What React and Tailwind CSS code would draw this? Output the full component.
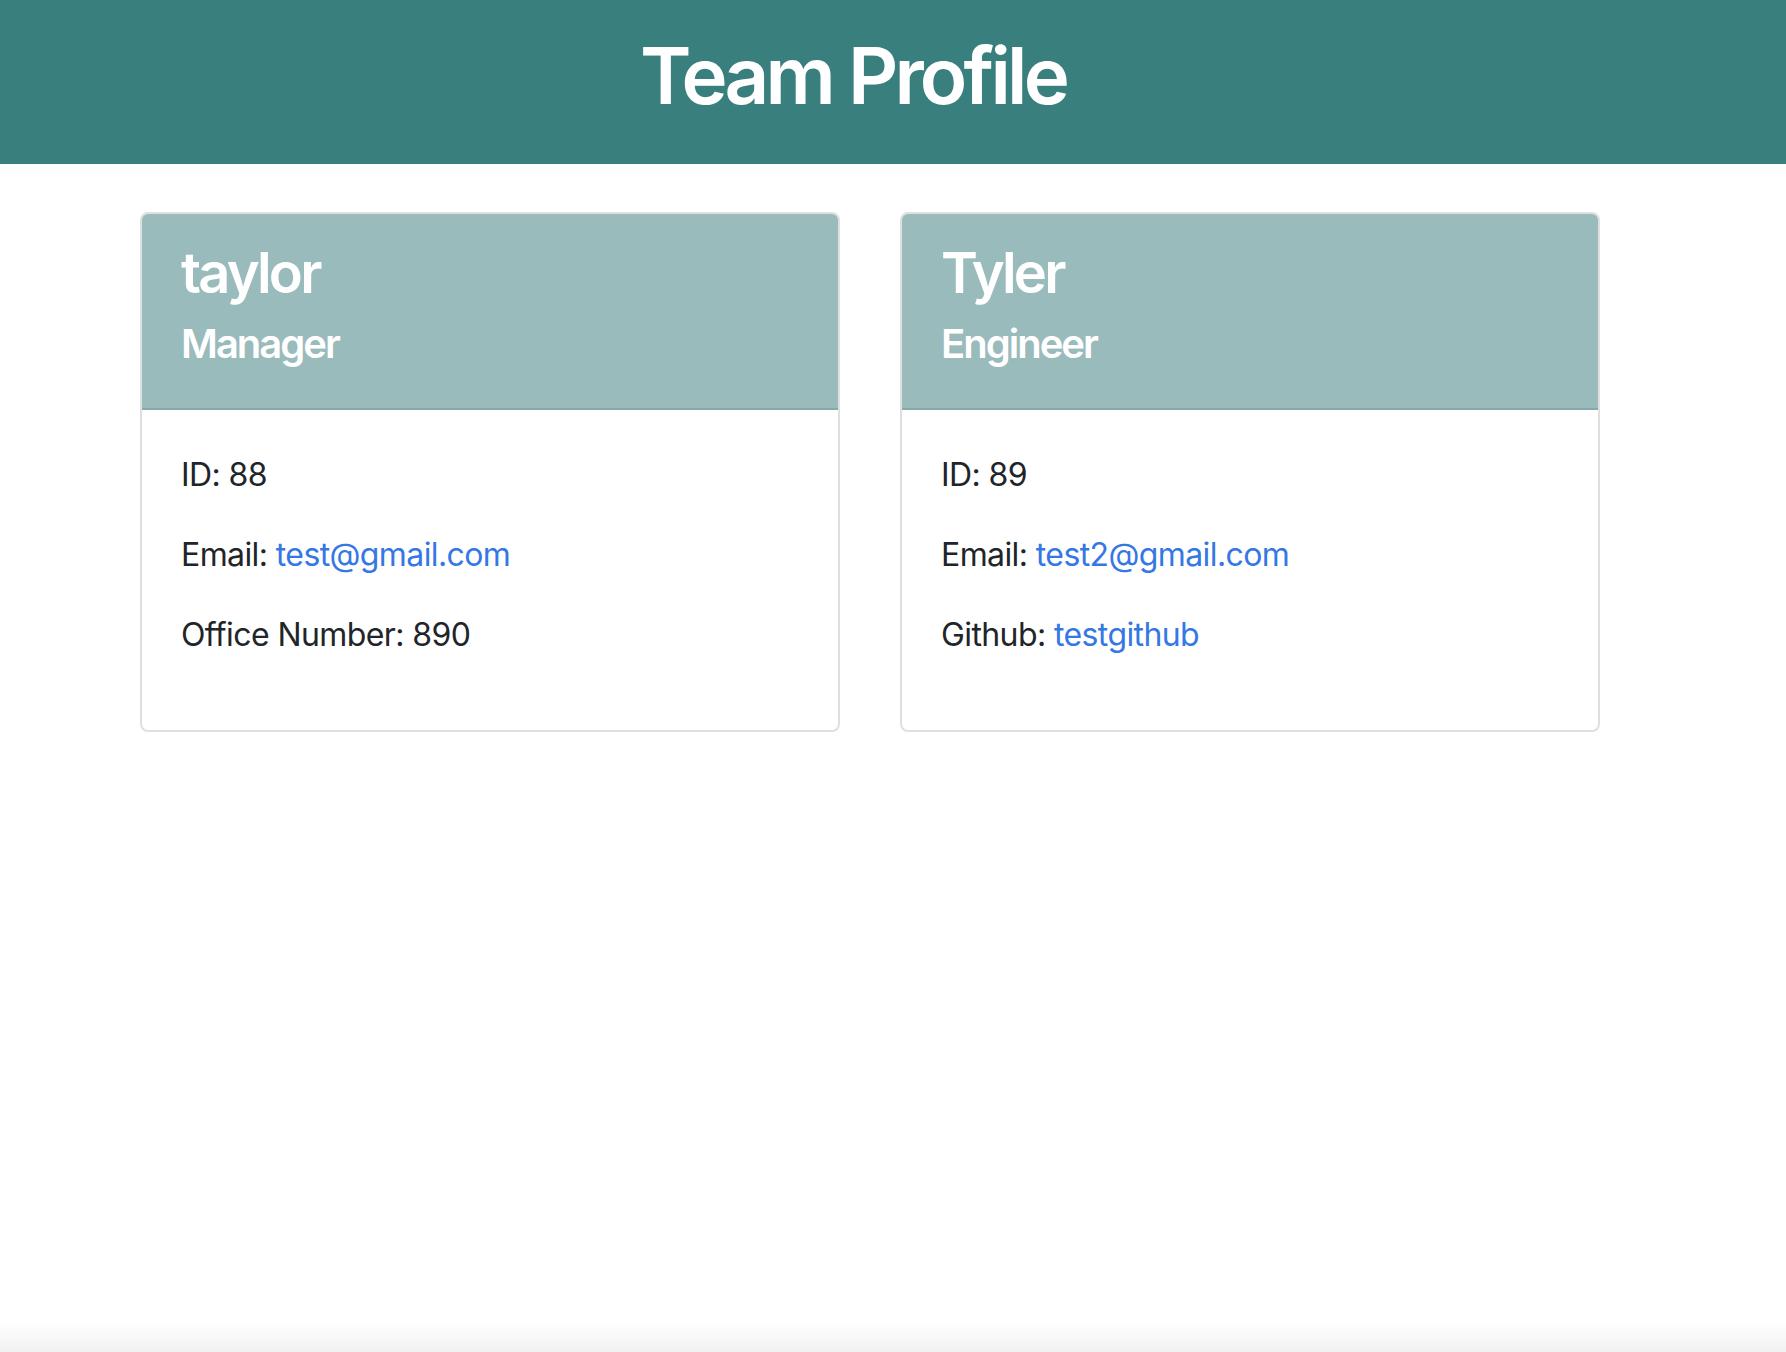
import React from "react";

function Card({ name, role, rows }) {
  return (
    <div className="w-[700px] border-2 border-[#dfdfdf] rounded-[8px] overflow-hidden bg-white">
      <div className="bg-[#9abbbb] px-[39px] pt-[26px] pb-[24px] border-b-2 border-[#87a8a8] text-white">
        <h3 className="text-[56px] leading-[67px] font-semibold tracking-[-2.8px] mb-[13px]">{name}</h3>
        <h5 className="text-[40px] leading-[48px] font-semibold tracking-[-2px] mb-[16px]">{role}</h5>
      </div>
      <div className="px-[39px] pt-[41px] pb-[39px] text-[32px] leading-[48px] tracking-[-0.6px] text-[#212529]">
        {rows.map((r, i) => (
          <p key={i} className="mb-[32px]">
            {r.label}
            {r.link ? <a className="text-[#3577e4]">{r.link}</a> : r.value}
          </p>
        ))}
      </div>
    </div>
  );
}

export default function App() {
  return (
    <div className="min-h-[1352px] bg-white flex flex-col font-['Inter','Liberation_Sans',sans-serif]">
      <header className="h-[164px] bg-[#387f7e] flex justify-center pr-[80px] pt-[28px]">
        <h1 className="text-[78px] leading-[96px] font-semibold text-white tracking-[-3.8px]">Team Profile</h1>
      </header>
      <main className="flex gap-[60px] pl-[140px] pt-[48px] items-start">
        <Card
          name="taylor"
          role="Manager"
          rows={[
            { label: "ID: ", value: "88" },
            { label: "Email: ", link: "test@gmail.com" },
            { label: "Office Number: ", value: "890" },
          ]}
        />
        <Card
          name="Tyler"
          role="Engineer"
          rows={[
            { label: "ID: ", value: "89" },
            { label: "Email: ", link: "test2@gmail.com" },
            { label: "Github: ", link: "testgithub" },
          ]}
        />
      </main>
      <div className="flex-1" />
      <div className="h-[30px] bg-gradient-to-b from-white to-[#f1f1f1]" />
    </div>
  );
}
